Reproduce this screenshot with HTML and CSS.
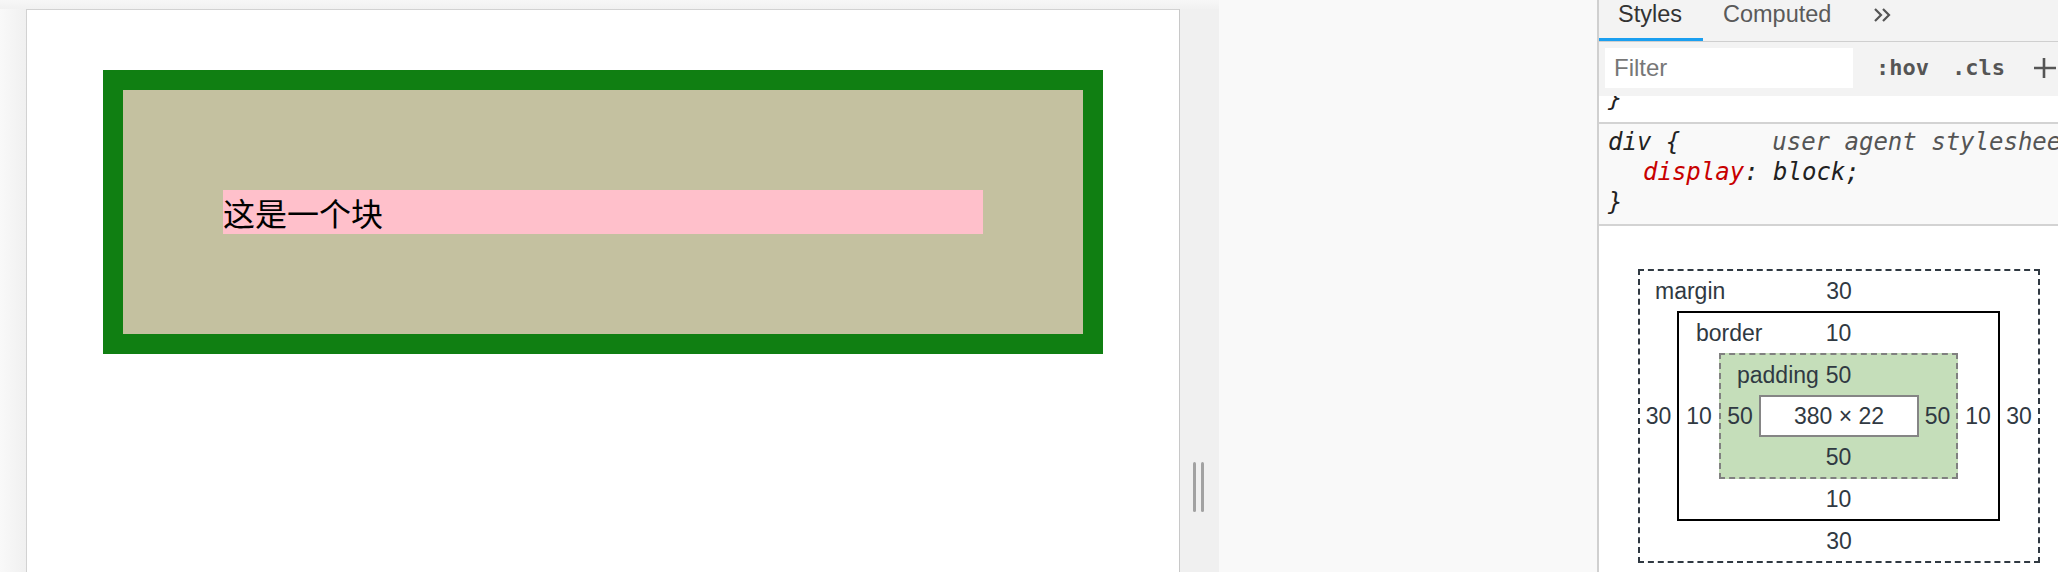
FILE: index.html
```html
<!DOCTYPE html>
<html lang="zh">
<head>
<meta charset="utf-8">
<title>Box model</title>
<link rel="stylesheet" href="styles.css">
</head>
<body>
<div class="app">
  <div class="viewport">
    <div class="stage">
      <div class="page">
        <div class="demo">
          <div class="demo-content">这是一个块</div>
        </div>
      </div>
      <div class="resizer">
        <span class="grip"></span><span class="grip"></span>
      </div>
    </div>
    <div class="rest"></div>
  </div>

  <div class="devtools">
    <div class="tabbar">
      <div class="tab active">Styles</div>
      <div class="tab">Computed</div>
      <svg class="more" width="18" height="14" viewBox="0 0 18 14">
        <path d="M1 1 L7 7 L1 13 M9 1 L15 7 L9 13" fill="none" stroke="#555" stroke-width="2.2"/>
      </svg>
    </div>
    <div class="filterbar">
      <div class="filter-input">Filter</div>
      <span class="toggle">:hov</span>
      <span class="toggle">.cls</span>
      <svg class="plus" width="24" height="22" viewBox="0 0 24 22">
        <path d="M1 11 H23 M11 1 V21" stroke="#555" stroke-width="2.6"/>
      </svg>
    </div>
    <div class="rule rule-partial">
      <div class="code-line">}</div>
    </div>
    <div class="rule rule-ua">
      <div class="code-line">div {<span class="source">user agent stylesheet</span></div>
      <div class="code-line indent"><span class="prop">display</span>: block;</div>
      <div class="code-line">}</div>
    </div>

    <div class="boxmodel">
      <div class="bm bm-margin">
        <div class="bm-top"><span class="bm-label">margin</span><span>30</span><span></span></div>
        <div class="bm-mid">
          <span class="bm-side w37">30</span>
          <div class="bm bm-border">
            <div class="bm-top"><span class="bm-label lb17">border</span><span>10</span><span></span></div>
            <div class="bm-mid">
              <span class="bm-side w40">10</span>
              <div class="bm bm-padding">
                <div class="bm-top"><span class="bm-label lb16">padding</span><span>50</span><span></span></div>
                <div class="bm-mid">
                  <span class="bm-side w38">50</span>
                  <div class="bm-content">380 × 22</div>
                  <span class="bm-side w37">50</span>
                </div>
                <div class="bm-bottom">50</div>
              </div>
              <span class="bm-side w40">10</span>
            </div>
            <div class="bm-bottom">10</div>
          </div>
          <span class="bm-side w38">30</span>
        </div>
        <div class="bm-bottom">30</div>
      </div>
    </div>
  </div>
</div>
</body>
</html>
```

FILE: styles.css
```css
* { box-sizing: border-box; }

html, body {
  margin: 0;
  padding: 0;
  width: 2058px;
  height: 572px;
  overflow: hidden;
  background: #f9f9f9;
}

.app {
  display: flex;
  width: 2058px;
  height: 572px;
}

/* ---------- viewport ---------- */
.viewport {
  display: flex;
  width: 1597px;
  height: 572px;
  background: #f9f9f9;
}

.stage {
  display: flex;
  width: 1219px;
  height: 572px;
  padding: 9px 0 0 26px;
  background:
    linear-gradient(to bottom, #f7f7f7 0, #f1f1f1 9px, transparent 9px),
    linear-gradient(to right, #f9f9f9 0, #f0f0f0 26px);
}

.page {
  width: 1154px;
  height: 563px;
  background: #ffffff;
  border-top: 1px solid #d2d2d2;
  border-left: 1px solid #d2d2d2;
  border-right: 1px solid #c8c8c8;
  padding: 0 16px;
}

.demo {
  width: 1000px;
  margin: 60px 0 0 60px;
  border: 20px solid #107f12;
  background: #c4c1a0;
  padding: 100px;
}

.demo-content {
  width: 760px;
  height: 44px;
  background: #ffc0cb;
  font-family: "Noto Sans CJK SC", "Noto Sans", sans-serif;
  font-size: 32px;
  line-height: 44px;
  color: #000;
  white-space: nowrap;
}

.resizer {
  display: flex;
  gap: 5px;
  width: 39px;
  height: 563px;
  padding: 453px 0 0 13px;
  background: #f0f0f0;
}

.grip {
  width: 3px;
  height: 50px;
  border-radius: 2px;
  background: #a2a2a2;
}

.rest {
  flex: 1;
  background: #f9f9f9;
}

/* ---------- devtools ---------- */
.devtools {
  width: 461px;
  height: 572px;
  border-left: 2px solid #d0d0d0;
  background: #ffffff;
  overflow: hidden;
  font-family: "Liberation Sans", Arial, sans-serif;
  color: #303942;
}

.tabbar {
  display: flex;
  align-items: flex-start;
  height: 42px;
  background: #f3f3f3;
  border-bottom: 1px solid #cfcfcf;
}

.tab {
  height: 41px;
  padding: 0 21px 0 19px;
  font-size: 23.5px;
  line-height: 28px;
  color: #5a5a5a;
}

.tab.active {
  color: #333;
  border-bottom: 3px solid #1a9ff0;
}

.tab + .tab {
  padding-left: 20px;
}

.more {
  margin: 8px 0 0 22px;
}

.filterbar {
  display: flex;
  align-items: center;
  height: 54px;
  padding: 6px 0 8px 6px;
  background: #f3f3f3;
}

.filter-input {
  width: 248px;
  height: 40px;
  background: #fff;
  padding-left: 9px;
  font-size: 24px;
  line-height: 40px;
  color: #777;
}

.toggle {
  margin-left: 23px;
  font-family: "DejaVu Sans Mono", "Liberation Mono", monospace;
  font-weight: bold;
  font-size: 22px;
  line-height: 40px;
  color: #555;
}

.plus {
  margin-left: 28px;
  flex: none;
}

.rule {
  border-bottom: 2px solid #d3d3d3;
  padding-left: 9px;
  font-family: "DejaVu Sans Mono", "Liberation Mono", monospace;
  font-style: italic;
  font-size: 24px;
  color: #222;
  white-space: nowrap;
  overflow: hidden;
}

.rule-partial {
  height: 28px;
  background: #fff;
}

.rule-partial .code-line {
  margin-top: -13px;
}

.rule-ua {
  height: 102px;
  padding-top: 3px;
  background: #f9f9f9;
}

.code-line {
  height: 30px;
  line-height: 30px;
}

.indent {
  padding-left: 35px;
}

.prop {
  color: #c80000;
}

.source {
  margin-left: 92px;
  color: #555;
}

/* ---------- box model ---------- */
.boxmodel {
  padding: 43px 0 0 39px;
  font-size: 23px;
  color: #303942;
}

.bm {
  display: flex;
  flex-direction: column;
}

.bm-margin {
  width: 402px;
  border: 2px dashed #303942;
}

.bm-border {
  width: 323px;
  border: 2px solid #000;
}

.bm-padding {
  width: 239px;
  border: 2px dashed #808080;
  background: #c5deba;
}

.bm-top {
  display: grid;
  grid-template-columns: 1fr auto 1fr;
  height: 40px;
  line-height: 40px;
  white-space: nowrap;
}

.bm-label {
  padding-left: 15px;
}

.bm-label.lb17 { padding-left: 17px; }
.bm-label.lb16 { padding-left: 16px; }

.bm-mid {
  display: flex;
  align-items: center;
}

.bm-side {
  text-align: center;
  line-height: 30px;
}

.w37 { width: 37px; }
.w38 { width: 38px; }
.w40 { width: 40px; }

.bm-bottom {
  height: 40px;
  line-height: 40px;
  text-align: center;
}

.bm-content {
  display: flex;
  align-items: center;
  justify-content: center;
  width: 160px;
  height: 42px;
  background: #fff;
  border: 2px solid #858585;
}
```
